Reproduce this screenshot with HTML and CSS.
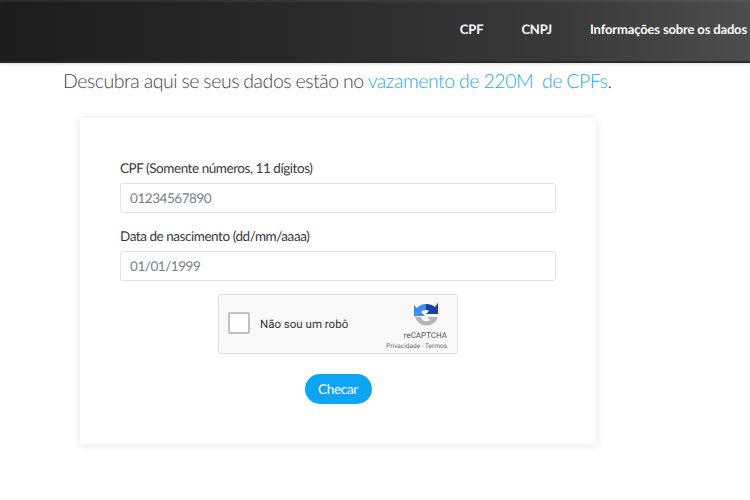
FILE: index.html
```html
<!DOCTYPE html>
<html lang="pt-BR">
<head>
    <meta charset="UTF-8">
    <title>Vazamento de CPFs</title>
    <link rel="stylesheet" href="styles.css">
</head>
<body>
    <nav class="navbar">
        <a href="#" class="nav-link">CPF</a>
        <a href="#" class="nav-link">CNPJ</a>
        <a href="#" class="nav-link">Informações sobre os dados</a>
    </nav>

    <p class="lead">Descubra aqui se seus dados estão no <a href="#">vazamento de 220M&nbsp; de CPFs</a>.</p>

    <form class="card">
        <label class="field-label" for="cpf">CPF (Somente números, 11 dígitos)</label>
        <input class="field" id="cpf" type="text" placeholder="01234567890">

        <label class="field-label" for="nasc">Data de nascimento (dd/mm/aaaa)</label>
        <input class="field" id="nasc" type="text" placeholder="01/01/1999">

        <div class="captcha">
            <span class="captcha-box"></span>
            <span class="captcha-text">Não sou um robô</span>
            <div class="captcha-brand">
                <svg class="captcha-logo" viewBox="0 0 24 26" width="24" height="26">
                    <path d="M12 1A12 12 0 0 0 3 5L0 2v11h11L7 9a6 6 0 0 1 5-2z" fill="#3d8df0"/>
                    <path d="M12 1v6a6 6 0 0 1 3 1l-3 3h12V0l-3 4a12 12 0 0 0-9-3z" fill="#1a3f9e"/>
                    <path d="M1 14h6a5.500 5.500 0 0 0 9 3l-3-3h11a12 12 0 0 1-23 0z" fill="#b4b4b4"/>
                </svg>
                <span class="captcha-name">reCAPTCHA</span>
                <span class="captcha-links">Privacidade - Termos</span>
            </div>
        </div>

        <button class="btn-check" type="button">Checar</button>
    </form>
</body>
</html>
```

FILE: styles.css
```css
* {
    margin: 0;
    padding: 0;
    box-sizing: border-box;
}
body {
    min-height: 100vh;
    background: #fff;
    font-family: Lato, "Open Sans", sans-serif;
    color: #333;
    text-rendering: geometricPrecision;
}
.navbar {
    display: flex;
    justify-content: flex-end;
    align-items: center;
    gap: 38px;
    height: 63px;
    padding: 0 3px 4px 0;
    background: linear-gradient(90deg, #1d1d1d 0%, #2a2a2a 40%, #3a3a3a 75%, #4d4d4d 100%);
    border-bottom: 2px solid #2b2b2b;
    box-shadow: inset 0 2px 2px rgba(255, 255, 255, 0.06), 0 1px 3px rgba(0, 0, 0, 0.15);
}
.nav-link {
    color: #fff;
    font-size: 13px;
    font-weight: 700;
    letter-spacing: -0.15px;
    text-decoration: none;
}
.lead {
    margin: 6px 0 0 63px;
    font-size: 19.500px;
    font-weight: 300;
    line-height: 25px;
    letter-spacing: -0.45px;
    word-spacing: -0.5px;
    color: #444;
}
.lead a {
    color: #1fa8ee;
    text-decoration: none;
}
.card {
    display: flex;
    flex-direction: column;
    width: 516px;
    height: 326px;
    margin: 24px 0 0 80px;
    padding: 40px;
    background: #fff;
    box-shadow: 0 1px 9px rgba(0, 0, 0, 0.1);
}
.field-label {
    font-size: 13.500px;
    line-height: 20px;
    letter-spacing: -0.45px;
    color: #3b3b3b;
    margin-bottom: 5px;
}
.field {
    width: 436px;
    height: 30px;
    padding: 0 9px;
    margin-bottom: 13px;
    border: 1px solid #e0e3e6;
    border-radius: 3px;
    font-family: inherit;
    font-size: 13.500px;
    letter-spacing: -0.45px;
    text-rendering: geometricPrecision;
}
.field::placeholder {
    color: #74828c;
    opacity: 1;
}
.captcha {
    display: flex;
    align-items: center;
    align-self: center;
    width: 240px;
    height: 60px;
    padding: 0 10px 0 9px;
    background: #f9f9f9;
    border: 1px solid #dfdfdf;
    border-radius: 3px;
}
.captcha-box {
    width: 22px;
    height: 22px;
    margin-bottom: 2px;
    background: #fff;
    border: 2px solid #c1c1c1;
    border-radius: 2px;
}
.captcha-text {
    margin-left: 10px;
    font-family: Roboto, sans-serif;
    font-size: 11.500px;
    color: #333;
}
.captcha-brand {
    display: flex;
    flex-direction: column;
    align-items: flex-end;
    align-self: flex-start;
    margin: 8px 0 0 auto;
}
.captcha-logo {
    margin: 0 9px 1px 0;
}
.captcha-name {
    font-family: Roboto, sans-serif;
    font-size: 8px;
    line-height: 12px;
    color: #555;
}
.captcha-links {
    font-family: Roboto, sans-serif;
    font-size: 6.500px;
    line-height: 9px;
    color: #666;
}
.btn-check {
    align-self: center;
    width: 67px;
    height: 30px;
    margin-top: 20px;
    border: none;
    border-radius: 15px;
    background: #0ea5f5;
    color: #fff;
    font-family: inherit;
    font-size: 13.500px;
    letter-spacing: -0.3px;
    text-rendering: geometricPrecision;
}
```
